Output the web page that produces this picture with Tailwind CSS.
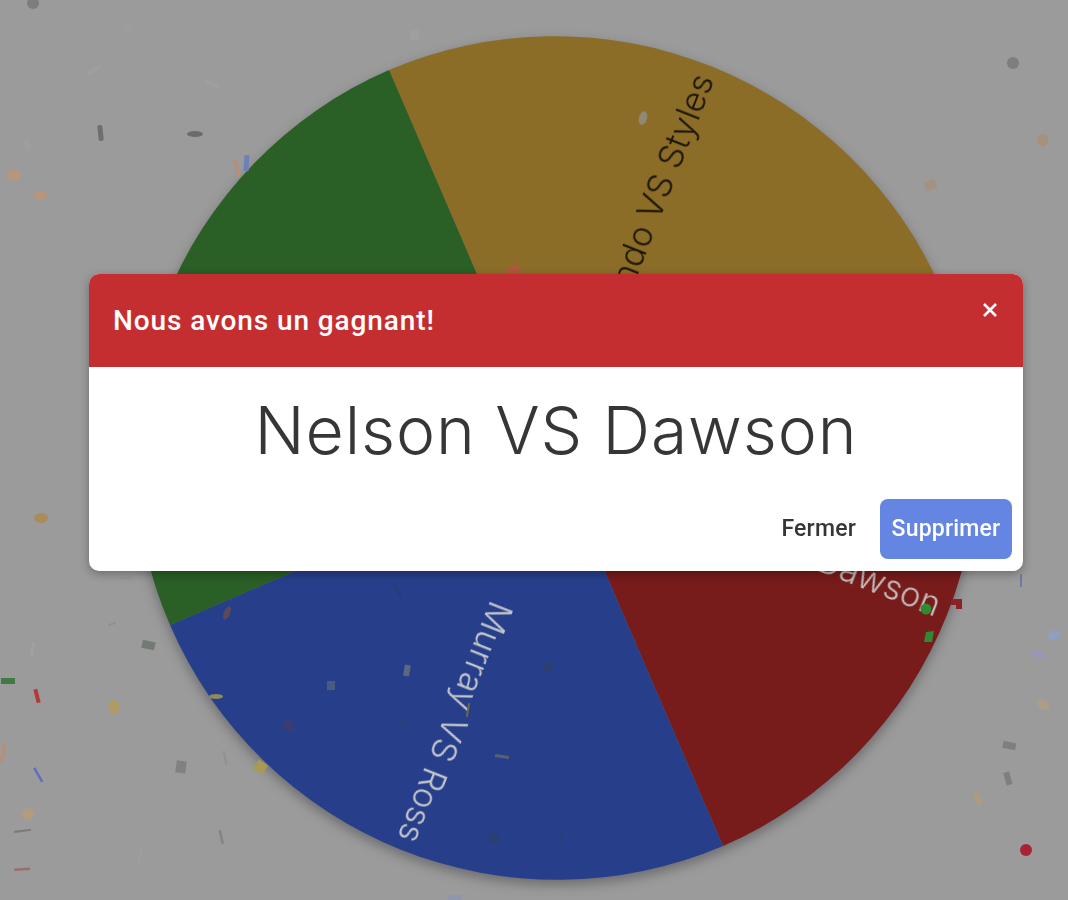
<!DOCTYPE html>
<html lang="fr">
<head>
<meta charset="utf-8">
<title>Roue</title>
<script src="https://cdn.jsdelivr.net/npm/@tailwindcss/browser@4"></script>
</head>
<body class="m-0">
<div class="relative w-[1068px] h-[900px] overflow-hidden bg-[#9b9b9b]">
  <svg class="absolute inset-0 w-[1068px] h-[900px]" viewBox="0 0 1068 900" xmlns="http://www.w3.org/2000/svg">
    <g class="drop-shadow-[0_5px_6px_rgba(50,50,60,0.45)]">
      <path d="M556 458 L389 70 A422 422 0 0 1 942 291 Z" fill="#8b6d27"/>
      <path d="M556 458 L942 291 A422 422 0 0 1 723 846 Z" fill="#771b1b"/>
      <path d="M556 458 L723 846 A422 422 0 0 1 170 625 Z" fill="#273f8b"/>
      <path d="M556 458 L170 625 A422 422 0 0 1 389 70 Z" fill="#2a5f25"/>
    </g>
    <g font-family="Inter, sans-serif" font-size="34.5" font-weight="300" text-anchor="end" class="blur-[0.3px]">
      <text transform="translate(556 458) rotate(-68.5) translate(410 0)" fill="#1d1709" dominant-baseline="middle">Fernando VS Styles</text>
      <text transform="translate(556 458) rotate(21.5) translate(411 0)" fill="#c4bdbd" dominant-baseline="middle">Nelson VS Dawson</text>
      <text transform="translate(556 458) rotate(111.5) translate(411 0)" fill="#c4c6cc" dominant-baseline="middle">Murray VS Ross</text>
    </g>
    <g class="blur-[0.7px]">
      <circle cx="33" cy="3" r="6" fill="#7d7d7d"/>
      <rect x="124" y="18" width="8" height="14" fill="#a0a0a0" opacity=".3"/>
      <rect x="86" y="68" width="16" height="4" transform="rotate(-30 94 70)" fill="#a6a6a6" opacity=".4"/>
      <rect x="205" y="82" width="14" height="4" transform="rotate(25 212 84)" fill="#a6a6a6" opacity=".4"/>
      <rect x="24" y="138" width="6" height="12" transform="rotate(-20 27 144)" fill="#a4a4a4" opacity=".3"/>
      <rect x="98" y="125" width="5" height="16" rx="2" transform="rotate(-6 100 133)" fill="#6f6f6f"/>
      <ellipse cx="195" cy="134" rx="8" ry="3" fill="#6b6b6b"/>
      <rect x="235" y="160" width="3.5" height="17" transform="rotate(-15 236 168)" fill="#b58f78"/>
      <rect x="244" y="155" width="5" height="16" transform="rotate(3 246 163)" fill="#6f80b8"/>
      <rect x="8" y="170" width="12" height="10" transform="rotate(8 14 175)" fill="#b6977b"/>
      <ellipse cx="40" cy="195" rx="7" ry="4.5" fill="#b6977b"/>
      <rect x="410" y="30" width="9" height="10" fill="#a3a3a3" opacity=".5"/>
      <circle cx="1013" cy="63" r="6" fill="#7e7e7e"/>
      <ellipse cx="1043" cy="140" rx="5.5" ry="6.5" fill="#a6917f"/>
      <rect x="925" y="181" width="11" height="9" transform="rotate(-20 930 185)" fill="#a6917f"/>
      <ellipse cx="643" cy="118" rx="4" ry="7" transform="rotate(15 643 118)" fill="#8f8a78"/>
      <rect x="507" y="266" width="13" height="8" transform="rotate(-20 513 270)" fill="#ab5a3a"/>
      <ellipse cx="41" cy="518" rx="7" ry="5" fill="#a88c5c"/>
      <rect x="118" y="577" width="14" height="2" fill="#8f8f8f" opacity=".4"/>
      <rect x="108" y="623" width="8" height="2" transform="rotate(-20 112 624)" fill="#8a8a8a" opacity=".7"/>
      <rect x="142" y="641" width="13" height="8" transform="rotate(12 148 645)" fill="#737a73"/>
      <rect x="31" y="642" width="3" height="14" transform="rotate(8 32 650)" fill="#a8a8a8" opacity=".5"/>
      <rect x="1" y="678" width="14" height="6" fill="#3f7a45"/>
      <rect x="35" y="689" width="4" height="14" transform="rotate(-14 37 696)" fill="#b33a3a"/>
      <ellipse cx="114" cy="707" rx="5.5" ry="7" transform="rotate(-12 114 707)" fill="#b39a63"/>
      <path d="M0 762 Q5 756 4 744" stroke="#b98e78" stroke-width="3.5" fill="none"/>
      <rect x="37" y="767" width="2.5" height="16" transform="rotate(-30 38 775)" fill="#5f6fc0"/>
      <rect x="176" y="761" width="10" height="12" transform="rotate(8 181 767)" fill="#818181"/>
      <rect x="224" y="751" width="2" height="14" transform="rotate(-12 225 758)" fill="#8f8a8a" opacity=".7"/>
      <circle cx="28" cy="814" r="6" fill="#b19c7e"/>
      <rect x="14" y="830" width="17" height="2" transform="rotate(-8 22 831)" fill="#7a7a7a"/>
      <rect x="220" y="830" width="2.5" height="14" transform="rotate(-12 221 837)" fill="#7e7e7e" opacity=".8"/>
      <rect x="139" y="850" width="2" height="14" transform="rotate(15 140 857)" fill="#a6a6a6" opacity=".4"/>
      <rect x="14" y="868" width="16" height="2.5" transform="rotate(-4 22 869)" fill="#9a6e6e"/>
      <ellipse cx="227" cy="613" rx="3" ry="7" transform="rotate(25 227 613)" fill="#5d4a58"/>
      <ellipse cx="216" cy="696.5" rx="7" ry="2.5" fill="#8e8a5a"/>
      <rect x="284" y="721" width="10" height="10" transform="rotate(20 289 726)" fill="#3a3d70"/>
      <rect x="255" y="762" width="11" height="11" transform="rotate(35 261 767)" fill="#a89a55"/>
      <rect x="396" y="584" width="2" height="14" transform="rotate(-35 397 590)" fill="#2a3c70"/>
      <rect x="404" y="665" width="6" height="11" transform="rotate(10 407 670)" fill="#5a6880"/>
      <circle cx="548" cy="667" r="5" fill="#2b3f70"/>
      <rect x="398" y="722" width="12" height="2" fill="#2b3f70"/>
      <rect x="467" y="703" width="2" height="14" transform="rotate(10 468 710)" fill="#6a6a4a"/>
      <rect x="495" y="755" width="14" height="3" transform="rotate(8 502 756)" fill="#57606e"/>
      <circle cx="494" cy="838" r="5.5" fill="#2b3f70"/>
      <rect x="561" y="828" width="2" height="15" transform="rotate(8 562 835)" fill="#2b3f70"/>
      <rect x="448" y="895" width="14" height="5" fill="#8f96ad"/>
      <rect x="327" y="681" width="8" height="9" fill="#4a5a80"/>
      <circle cx="926" cy="609" r="5.5" fill="#2f8a32"/>
      <path d="M926 632 L934 631 L932 642 L924 642 Z" fill="#2f8a32"/>
      <rect x="951" y="599" width="11" height="6" fill="#8e2222"/>
      <rect x="956" y="600" width="6" height="9" fill="#8e2222"/>
      <ellipse cx="1054" cy="635" rx="6.5" ry="4.5" transform="rotate(-20 1054 635)" fill="#8f9fbf"/>
      <ellipse cx="1038" cy="654" rx="7" ry="3" transform="rotate(20 1038 654)" fill="#9797bb"/>
      <ellipse cx="1043" cy="705" rx="7" ry="4.5" transform="rotate(35 1043 705)" fill="#ad9c88"/>
      <rect x="1003" y="742" width="13" height="7" transform="rotate(12 1009 745)" fill="#7f7f7f"/>
      <rect x="1005" y="772" width="6" height="13" transform="rotate(-15 1008 779)" fill="#7f7f7f"/>
      <ellipse cx="978" cy="799" rx="4" ry="7" transform="rotate(-15 978 799)" fill="#ad9a84"/>
      <circle cx="1026" cy="850" r="6" fill="#a82434"/>
      <rect x="1020" y="574" width="2" height="13" fill="#6b7ba8"/>
    </g>
  </svg>

  <div class="relative pt-[274px] pl-[89px]">
    <div class="w-[934px] h-[297px] flex flex-col overflow-hidden rounded-[10px] bg-white shadow-[0_3px_10px_rgba(0,0,0,0.3)] font-['Roboto',sans-serif]">
      <div class="relative h-[93px] shrink-0 bg-[#c42e31] pl-6 pt-[27px]">
        <h2 class="text-[28px] leading-[40px] font-medium tracking-[0.9px] text-white">Nous avons un gagnant!</h2>
        <button class="absolute right-[26px] top-[29px] w-[14px] h-[14px] text-white" aria-label="Fermer">
          <svg viewBox="0 0 14 14" class="w-[14px] h-[14px]" fill="none" stroke="currentColor" stroke-width="2.6"><path d="M1 1 L13 13 M13 1 L1 13"/></svg>
        </button>
      </div>
      <div class="flex-1 flex items-start justify-center pt-[20px]">
        <p class="text-[66px] leading-[86px] font-light tracking-[0.9px] text-[#363636] font-['Inter',sans-serif]">Nelson VS Dawson</p>
      </div>
      <div class="flex items-center justify-end gap-6 pr-[11px] pb-3">
        <button class="text-[23px] leading-[60px] font-medium tracking-[0.2px] text-[#363636]">Fermer</button>
        <button class="h-[60px] w-[132px] rounded-lg bg-[#6585e3] text-[23px] font-medium tracking-[0.2px] text-white">Supprimer</button>
      </div>
    </div>
  </div>
</div>
</body>
</html>
